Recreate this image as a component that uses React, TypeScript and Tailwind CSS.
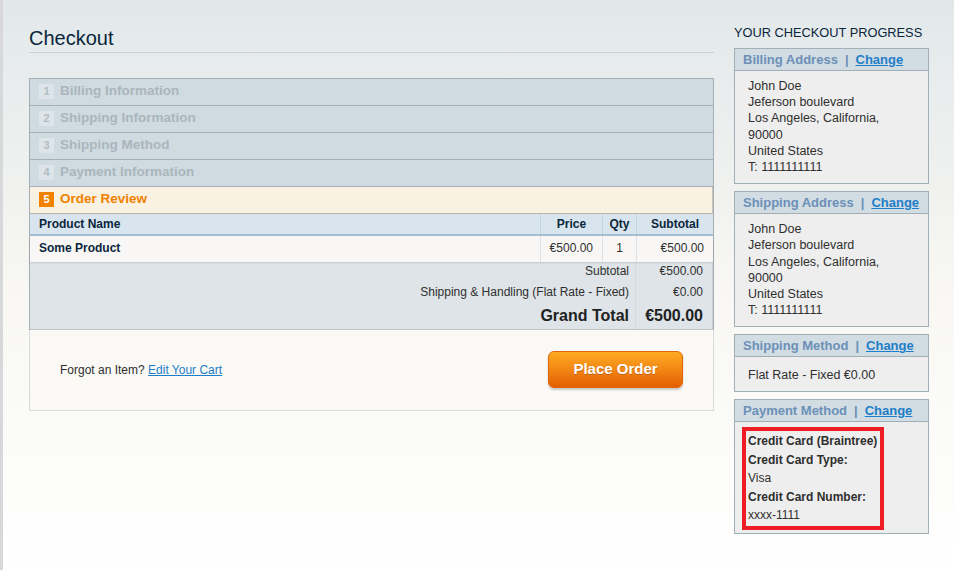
import React from 'react';

const steps = [
  { n: 1, title: 'Billing Information' },
  { n: 2, title: 'Shipping Information' },
  { n: 3, title: 'Shipping Method' },
  { n: 4, title: 'Payment Information' },
];

const address = [
  'John Doe',
  'Jeferson boulevard',
  'Los Angeles, California,',
  '90000',
  'United States',
  'T: 1111111111',
];

function SideBox({ title, children }: { title: string; children: React.ReactNode }) {
  return (
    <div className="border border-[#a3afb6] bg-[#eeeeee]">
      <div className="h-[22px] bg-[#d1dce3] border-b border-[#a3afb6] pl-[8px] flex items-center text-[13px] font-bold leading-none whitespace-nowrap">
        <span className="text-[#6c90b7]">{title}</span>
        <span className="text-[#6c90b7] mx-[7px]">|</span>
        <a href="#" className="text-[#1e7ec8] underline">Change</a>
      </div>
      {children}
    </div>
  );
}

function Address() {
  return (
    <div className="pl-[13px] pt-[7px] pb-[8px] text-[12.5px] leading-[16.2px]">
      {address.map((l) => (
        <div key={l}>{l}</div>
      ))}
    </div>
  );
}

export default function App() {
  return (
    <div
      className="min-h-[570px] w-[954px] border-l-[3px] border-[#d6d8d9] bg-gradient-to-b from-[#e2e8ea] via-[#f8f7f3] via-50% to-white text-[#2f2f2f]"
      style={{ fontFamily: '"Liberation Sans", Arial, sans-serif' }}
    >
      <div className="flex gap-[20px] pl-[26px]">
        {/* Main column */}
        <div className="w-[685px] pt-[26px]">
          <h1 className="h-[27px] border-b border-[#cfcfcf] text-[20px] leading-[24px] text-[#0a263c]">Checkout</h1>

          <div className="mt-[25px] border-x border-t border-[#a3afb4]">
            {steps.map((s) => (
              <div key={s.n} className="h-[27px] bg-[#d0dbe1] border-b border-[#a3afb4] flex items-center pl-[9px] pb-[2px]">
                <span className="w-[15px] h-[15px] bg-[#dde5ea] text-[#b2bcc2] text-[11px] font-bold flex items-center justify-center leading-none">
                  {s.n}
                </span>
                <span className="ml-[6px] text-[13.5px] font-bold text-[#aab5bc]">{s.title}</span>
              </div>
            ))}
            <div className="h-[27px] bg-[#f9f1e2] border-b border-[#bdb4a6] flex items-center pl-[9px] pb-[2px] border-r border-r-[#c9c2b6]">
              <span className="w-[15px] h-[15px] bg-[#f18200] text-white text-[11px] font-bold flex items-center justify-center leading-none">
                5
              </span>
              <span className="ml-[6px] text-[13.5px] font-bold text-[#f18200]">Order Review</span>
            </div>

            {/* Review table */}
            <div className="text-[12px]">
              <div className="flex h-[22px] bg-[#d9e5ee] border-b-2 border-[#a9bfd0] font-bold text-[#0a263c]">
                <div className="flex-1 pl-[9px] flex items-center">Product Name</div>
                <div className="w-[62px] border-l border-[#c4d5e2] flex items-center justify-center">Price</div>
                <div className="w-[34px] border-l border-[#c4d5e2] flex items-center justify-center">Qty</div>
                <div className="w-[77px] border-l border-[#c4d5e2] flex items-center justify-center">Subtotal</div>
              </div>
              <div className="flex h-[26px] bg-[#f8f7f5] shadow-[0_1px_2px_rgba(0,0,0,0.12)] relative">
                <div className="flex-1 pl-[9px] flex items-center pb-[3px] font-bold text-[#0a263c]">Some Product</div>
                <div className="w-[62px] border-l border-[#dbe3ea] flex items-center pb-[3px] justify-end pr-[9px]">€500.00</div>
                <div className="w-[34px] border-l border-[#dbe3ea] flex items-center pb-[3px] justify-center">1</div>
                <div className="w-[77px] border-l border-[#dbe3ea] flex items-center pb-[3px] justify-end pr-[9px]">€500.00</div>
              </div>
              <div className="bg-[#dee4e7] border-b border-[#c2c4c5] border-r border-r-[#c9cfd2]">
                <div className="flex h-[20px] items-center">
                  <div className="flex-1 text-right pr-[6px] pb-[2px]">Subtotal</div>
                  <div className="w-[77px] h-full border-l border-[#d2dadf] flex items-center justify-end pr-[9px] pb-[2px]">€500.00</div>
                </div>
                <div className="flex h-[21px] items-center">
                  <div className="flex-1 text-right pr-[6px] pb-[2px]">Shipping &amp; Handling (Flat Rate - Fixed)</div>
                  <div className="w-[77px] h-full border-l border-[#d2dadf] flex items-center justify-end pr-[9px] pb-[2px]">€0.00</div>
                </div>
                <div className="flex h-[26px] items-center text-[16px] font-bold text-[#222]">
                  <div className="flex-1 text-right pr-[6px]">Grand Total</div>
                  <div className="w-[77px] h-full border-l border-[#d2dadf] flex items-center justify-end pr-[9px]">€500.00</div>
                </div>
              </div>
            </div>
          </div>

          {/* Footer */}
          <div className="h-[81px] bg-[#faf9f6] border-x border-b border-[#d6dbdf] flex items-center justify-between pl-[30px] pr-[30px]">
            <p className="text-[12px] text-[#2f2f2f]">
              Forgot an Item? <a href="#" className="text-[#1e7ec8] underline">Edit Your Cart</a>
            </p>
            <button className="w-[135px] h-[37px] -mt-[2px] rounded-[6px] border border-[#e0650c] bg-gradient-to-b from-[#fdab22] to-[#e45f02] text-white text-[15px] font-bold shadow-[0_2px_2px_rgba(0,0,0,0.2)] [text-shadow:0_1px_0_rgba(150,60,0,0.5)]">
              Place Order
            </button>
          </div>
        </div>

        {/* Right column */}
        <div className="w-[195px] pt-[25px]">
          <h2 className="text-[12.8px] leading-[16px] text-[#0a263c] mb-[7px] whitespace-nowrap">YOUR CHECKOUT PROGRESS</h2>

          <div className="flex flex-col gap-[7px]">
            <SideBox title="Billing Address">
              <Address />
            </SideBox>

            <SideBox title="Shipping Address">
              <Address />
            </SideBox>

            <SideBox title="Shipping Method">
              <div className="pl-[13px] pt-[10px] pb-[8px] text-[12.5px] leading-[16px]">Flat Rate - Fixed €0.00</div>
            </SideBox>

            <SideBox title="Payment Method">
              <div className="pl-[7px] pt-[5px] pb-[3px]">
                <div className="w-[142px] border-4 border-[#ee1c25] pl-[2px] py-[1px] text-[12px] leading-[18.5px]">
                  <div className="font-bold">Credit Card (Braintree)</div>
                  <div className="font-bold">Credit Card Type:</div>
                  <div>Visa</div>
                  <div className="font-bold">Credit Card Number:</div>
                  <div>xxxx-1111</div>
                </div>
              </div>
            </SideBox>
          </div>
        </div>
      </div>
    </div>
  );
}
